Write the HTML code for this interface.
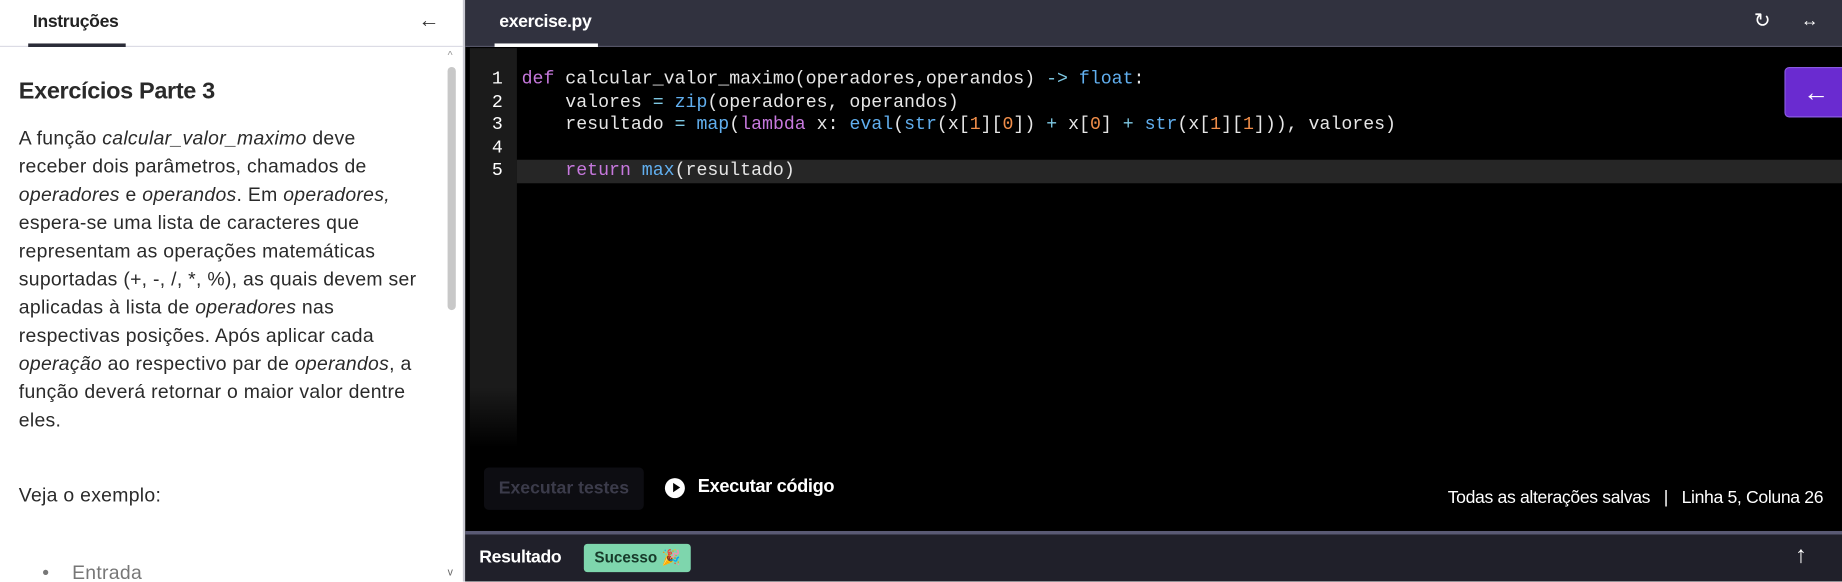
<!DOCTYPE html>
<html><head><meta charset="utf-8"><style>
*{margin:0;padding:0;box-sizing:border-box}
body{width:1842px;height:582px;overflow:hidden;font-family:"Liberation Sans",sans-serif;background:#fff;position:relative}
#w{position:absolute;left:0;top:0;width:1568px;height:495px;transform:scale(1.17474);transform-origin:0 0}
.left{position:absolute;left:0;top:0;width:394px;height:495px;background:#fff;overflow:hidden}
.lh{height:40px;border-bottom:1px solid #dcdce5;position:relative}
.lh .t{position:absolute;left:28px;top:10px;font-size:15px;font-weight:bold;color:#222;letter-spacing:-0.3px}
.lh .u{position:absolute;left:24px;top:37px;width:83px;height:3px;background:#2b2c38}
.lh .a{position:absolute;left:356px;top:7px;font-size:18px;color:#333}
.content{position:absolute;left:16px;top:66px;width:360px;color:#2a2a2a;font-size:16.5px;letter-spacing:0.25px;line-height:24px;white-space:nowrap}
.content h2{font-size:20px;font-weight:bold;margin-bottom:16px;letter-spacing:-0.3px}
.sb{position:absolute;left:381px;top:57px;width:7px;height:207px;background:#c8c8c8;border-radius:4px}
.div{position:absolute;left:394px;top:0;width:2px;height:495px;background:#c9c9d2}
.right{position:absolute;left:396px;top:0;width:1172px;height:495px;background:#000;overflow:hidden}
.rh{height:40px;background:#31323f;border-bottom:1px solid #555566;position:relative}
.rh .t{position:absolute;left:29px;top:10px;color:#fff;font-weight:bold;font-size:15px;letter-spacing:-0.3px}
.rh .u{position:absolute;left:25px;top:37px;width:88px;height:3px;background:#fff}
.gut{position:absolute;left:4px;top:41px;width:40px;height:340px;background:linear-gradient(#1b1b1b 85%,#000)}
.code{position:absolute;left:0;top:58px;font-family:"Liberation Mono",monospace;font-size:15.5px;line-height:19.5px;color:#e6e6e6;white-space:pre}
.ln{position:absolute;left:18px;width:14px;text-align:right;color:#fff}
.cl{position:absolute;left:48px}
.act{position:absolute;left:44px;top:136px;width:1130px;height:20px;background:#262626}
.k{color:#c678dd}.f{color:#61afef}.n{color:#f08d49}.o{color:#7ec8e3}
.btn{position:absolute;left:1123px;top:57px;width:54px;height:43px;background:#6a2bd0;border-radius:4px;color:#fff;font-size:22px;text-align:center;line-height:42px;border:1px solid #8a5ae0}
.bot{position:absolute;left:0;top:452px;width:1172px;height:3px;background:#5a5a74}
.res{position:absolute;left:0;top:455px;width:1172px;height:40px;background:#20202a}
.res .t{position:absolute;left:12px;top:11px;color:#fff;font-weight:bold;font-size:15px;letter-spacing:-0.3px}
.badge{position:absolute;left:101px;top:8px;width:91px;height:24px;background:#7ed6ad;border-radius:3px;color:#173a2a;font-weight:bold;font-size:13px;line-height:24px;padding-left:9px}
</style></head><body><div id="w">
<div class="left">
<div class="lh"><span class="t">Instruções</span><div class="u"></div><span class="a">←</span></div>
<div class="content">
<h2>Exercícios Parte 3</h2>
<p>A função <i>calcular_valor_maximo</i> deve<br>receber dois parâmetros, chamados de<br><i>operadores</i> e <i>operandos</i>. Em <i>operadores,</i><br>espera-se uma lista de caracteres que<br>representam as operações matemáticas<br>suportadas (+, -, /, *, %), as quais devem ser<br>aplicadas à lista de <i>operadores</i> nas<br>respectivas posições. Após aplicar cada<br><i>operação</i> ao respectivo par de <i>operandos</i>, a<br>função deverá retornar o maior valor dentre<br>eles.</p>
<p style="margin-top:40px">Veja o exemplo:</p>
<p style="margin-top:42px;padding-left:20px;color:#777">•&nbsp;&nbsp;&nbsp;&nbsp;Entrada</p>
</div>
<div class="sb"></div>
<div style="position:absolute;left:381px;top:42px;font-size:9px;color:#999">^</div>
<div style="position:absolute;left:381px;top:482px;font-size:9px;color:#666">v</div>
</div>
<div class="div"></div>
<div class="right">
<div class="rh"><span class="t">exercise.py</span><div class="u"></div>
<span style="position:absolute;left:1097px;top:8px;color:#fff;font-size:17px">↻</span>
<span style="position:absolute;left:1137px;top:9px;color:#fff;font-size:15px">↔</span></div>
<div class="gut"></div>
<div class="act"></div>
<div class="code">
<div class="ln" style="top:0">1</div><div class="ln" style="top:19.5px">2</div><div class="ln" style="top:39px">3</div><div class="ln" style="top:58.5px">4</div><div class="ln" style="top:78px">5</div>
<div class="cl" style="top:0"><span class="k">def</span> calcular_valor_maximo(operadores,operandos) <span class="o">-&gt;</span> <span class="f">float</span>:</div>
<div class="cl" style="top:19.5px">    valores <span class="o">=</span> <span class="f">zip</span>(operadores, operandos)</div>
<div class="cl" style="top:39px">    resultado <span class="o">=</span> <span class="f">map</span>(<span class="k">lambda</span> x: <span class="f">eval</span>(<span class="f">str</span>(x[<span class="n">1</span>][<span class="n">0</span>]) <span class="o">+</span> x[<span class="n">0</span>] <span class="o">+</span> <span class="f">str</span>(x[<span class="n">1</span>][<span class="n">1</span>])), valores)</div>
<div class="cl" style="top:78px">    <span class="k">return</span> <span class="f">max</span>(resultado)</div>
</div>
<div class="btn">←</div>
<div style="position:absolute;left:16px;top:398px;width:136px;height:36px;background:#0d0d12;border-radius:4px;color:#3b3b4a;font-weight:bold;font-size:15px;line-height:36px;text-align:center">Executar testes</div>
<div style="position:absolute;left:170px;top:407px;width:17px;height:17px;border-radius:50%;background:#fff"></div>
<div style="position:absolute;left:177px;top:411px;width:0;height:0;border-left:6px solid #000;border-top:4.5px solid transparent;border-bottom:4.5px solid transparent"></div>
<div style="position:absolute;left:198px;top:406px;color:#fff;font-weight:bold;font-size:15.5px;letter-spacing:-0.3px">Executar código</div>
<div style="position:absolute;right:16px;top:415px;color:#fff;font-size:15px;letter-spacing:-0.3px;white-space:pre">Todas as alterações salvas   |   Linha 5, Coluna 26</div>
<div class="bot"></div>
<div class="res"><span class="t">Resultado</span><div class="badge">Sucesso 🎉</div>
<span style="position:absolute;left:1132px;top:7px;color:#fff;font-size:20px">↑</span></div>
</div>
</div></body></html>
